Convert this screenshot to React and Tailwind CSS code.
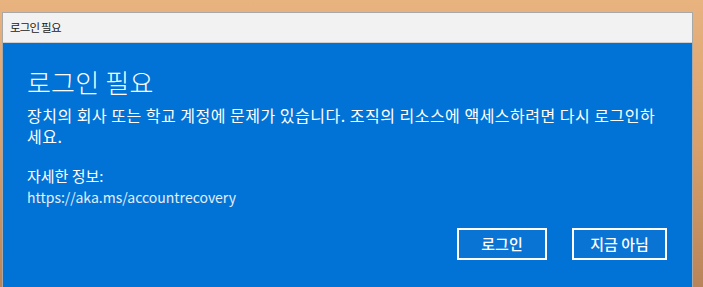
import React from 'react';

const font = { fontFamily: '"Noto Sans CJK KR", "Noto Sans", sans-serif' };

export default function App() {
  return (
    <div
      className="h-[287px] w-[703px] overflow-hidden bg-gradient-to-b from-[#e8b37f] via-[#d9a06c] to-[#b98459] pt-[12px] pl-[2px]"
      style={font}
    >
      <div className="flex h-[300px] w-[691px] flex-col border border-[#a8a8a8] bg-[#0173d6]">
        {/* Title bar */}
        <div className="flex h-[30px] shrink-0 items-center border-b border-[#cfcfcf] bg-[#f2f2f2] pl-[7px]">
          <span className="text-[11.5px] tracking-[-0.8px] text-[#1a1a1a]">로그인 필요</span>
        </div>

        {/* Content */}
        <div className="flex flex-col pl-[24px] pr-[24px] text-white">
          <h1 className="mt-[22px] text-[26px] font-light leading-[34px] tracking-[0.2px]">로그인 필요</h1>
          <div className="mt-[6px] flex flex-col text-[16px] leading-[21px] tracking-[0.5px]">
            <span>장치의 회사 또는 학교 계정에 문제가 있습니다. 조직의 리소스에 액세스하려면 다시 로그인하</span>
            <span>세요.</span>
          </div>
          <p className="mt-[19px] text-[15px] leading-[20px]">자세한 정보:</p>
          <p className="mt-[1px] text-[14px] leading-[20px] text-[#e3eefa]">https://aka.ms/accountrecovery</p>

          <div className="mt-[21px] flex justify-end gap-[25px] pr-[1px]">
            <button className="h-[32px] w-[90px] border-2 border-white bg-[#0a74d5] text-[15px] font-medium text-white">
              로그인
            </button>
            <button className="h-[32px] w-[95px] border-2 border-white bg-[#0a74d5] text-[15px] font-medium text-white">
              지금 아님
            </button>
          </div>
        </div>
      </div>
    </div>
  );
}
